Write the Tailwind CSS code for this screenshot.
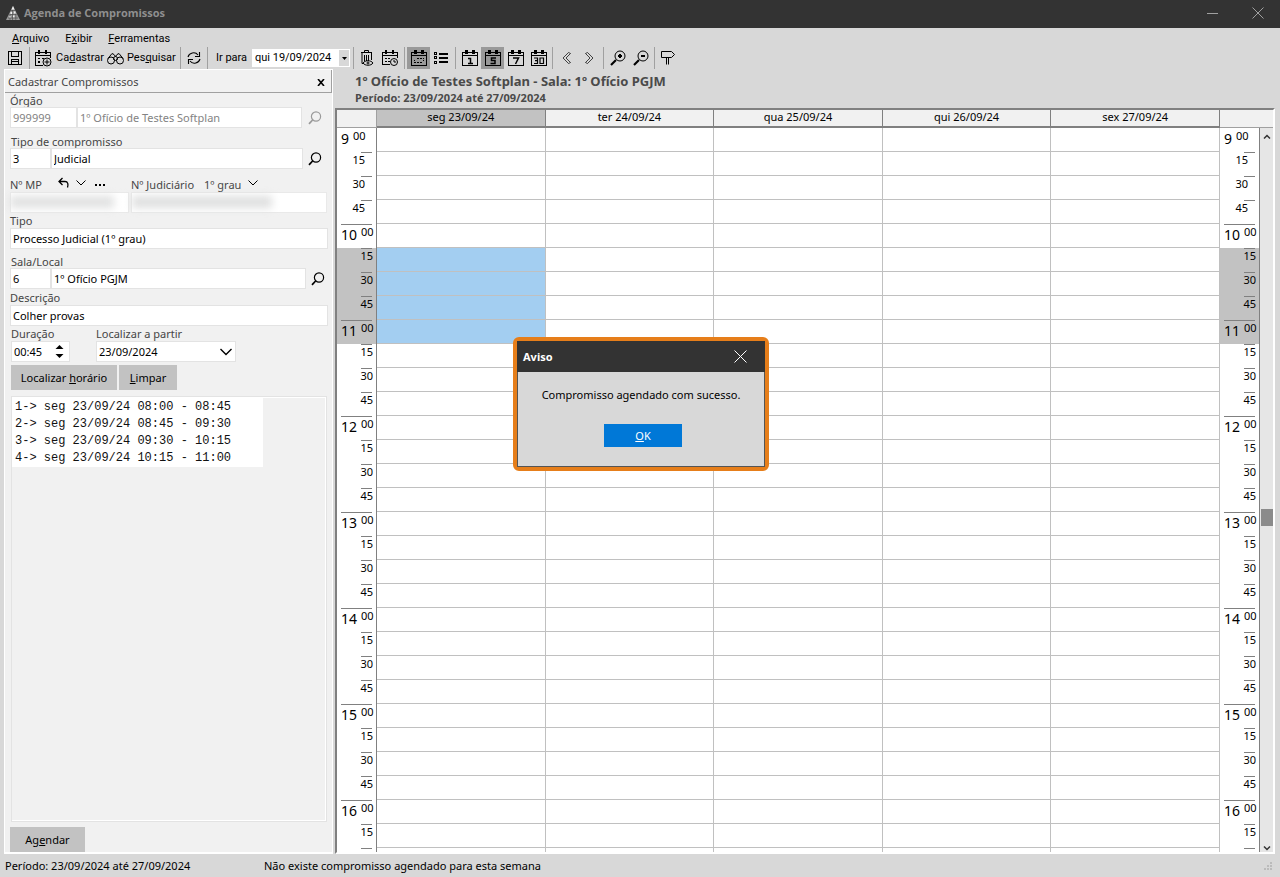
<!DOCTYPE html>
<html lang="pt-BR">
<head>
<meta charset="utf-8">
<title>Agenda de Compromissos</title>
<meta name="viewport" content="width=device-width, initial-scale=1">
<script src="https://cdn.jsdelivr.net/npm/@tailwindcss/browser@4"></script>
</head>
<body class="relative flex h-screen flex-col overflow-hidden bg-[#d8d8d8] font-['Noto_Sans','Open_Sans',sans-serif] text-[11px] leading-4 text-black">

<!-- Shared icons -->
<svg class="hidden" aria-hidden="true">
  <symbol id="i-cal" viewBox="0 0 16 16"><path fill="currentColor" d="M0 2h16v14H0zM1 6v9h14V6zM1 3v2h14V3z" fill-rule="evenodd"/><path fill="currentColor" d="M3 0h3v4H3zM10 0h3v4h-3z"/></symbol>
  <symbol id="i-find" viewBox="0 0 14 14"><circle cx="8" cy="5.5" r="4.6" fill="none" stroke="currentColor" stroke-width="1.2"/><path d="M4.6 9 1 12.8" fill="none" stroke="currentColor" stroke-width="1.7"/></symbol>
  <symbol id="i-zoom" viewBox="0 0 16 16"><circle cx="10" cy="6" r="5" fill="none" stroke="currentColor"/><path d="M6 10 1 15" fill="none" stroke="currentColor" stroke-width="2.2"/><path d="M8 6h4" stroke="currentColor" stroke-width="2"/></symbol>
  <symbol id="i-down" viewBox="0 0 10 6"><path d="M.5.5 5 5 9.500.5" fill="none" stroke="currentColor"/></symbol>
</svg>

<header class="flex h-7 shrink-0 items-center bg-[#333333] pb-0.5 pl-1.5 text-[#8f8f8f]">
  <svg class="h-4 w-3.5" viewBox="0 0 14 16"><path d="M7 1 14 15H0z" fill="#9a9a9a"/><path d="M7 1 8.500 4.500H5.500zM4.500 7h2v2h-2zM8 6.500h1.500v2H8zM3 11h2v2H3zM7 10.500h1.500v2H7z" fill="#f0f0f0"/><path d="M5 5.500h4M3.500 9.500h7M2 13h10M6.500 5v10M9.800 9v6M4 9.500V15" stroke="#444" stroke-width=".6"/></svg>
  <h1 class="ml-1 grow font-['Open_Sans',sans-serif] text-[11px] font-bold">Agenda de Compromissos</h1>
  <button class="mr-[34px] h-4 w-3" aria-label="Minimizar"><svg class="h-4 w-3" viewBox="0 0 12 16"><path d="M1 8.500h11" stroke="#a0a0a0"/></svg></button>
  <button class="mr-4 h-3 w-3" aria-label="Fechar"><svg class="h-3 w-3" viewBox="0 0 12 12"><path d="M.5.5l11 11M11.500.5l-11 11" stroke="#a0a0a0"/></svg></button>
</header>

<nav class="flex h-[19px] shrink-0 items-center gap-4 pt-0.5 pl-3 font-[Roboto,sans-serif]">
  <button><u>A</u>rquivo</button>
  <button>E<u>x</u>ibir</button>
  <button><u>F</u>erramentas</button>
</nav>

<div class="flex h-[22px] shrink-0 items-center pl-1 font-[Roboto,sans-serif]" role="toolbar">
  <button class="grid h-[22px] w-[22px] place-items-center" aria-label="Salvar"><svg class="h-3.5 w-3.5" viewBox="0 0 14 14" fill="none" stroke="#000" shape-rendering="crispEdges"><path d="M.5.5h13v13H.5zM3.500.5v5h7v-5M3.500 13V8.500h7V13M4 10.500h6"/></svg></button>
  <i class="ml-[3px] h-[22px] w-px bg-[#a0a0a0]"></i>
  <button class="ml-[5px] flex h-[22px] w-[66px] items-center gap-1 whitespace-nowrap"><svg class="h-[17px] w-[17px] shrink-0" viewBox="0 0 17 17" fill="none" stroke="#000"><path d="M8 15.500H.5v-13h15V8M.5 5.500h15" shape-rendering="crispEdges"/><path d="M3 0h2v4H3zM10 0h2v4h-2zM3 8h2v1H3zM3 11h2v2H3zM7 8h2v1H7z" fill="#000" stroke="none"/><circle cx="12" cy="12" r="4"/><path d="M12 9.500v5M9.500 12h5"/></svg><span>Ca<u>d</u>astrar</span></button>
  <button class="ml-1.5 flex h-[22px] w-[68px] items-center gap-[3px] whitespace-nowrap"><svg class="h-[13px] w-[17px] shrink-0" viewBox="0 0 17 13" fill="none" stroke="#000"><circle cx="4" cy="8.500" r="3.500"/><circle cx="13" cy="8.500" r="3.500"/><circle cx="8.500" cy="6.500" r="2"/><path d="M1 6.500 5 1.500l2 1 1.500 2 1.500-2 2-1 4 5"/></svg><span>Pes<u>q</u>uisar</span></button>
  <i class="ml-[5px] h-[22px] w-px bg-[#a0a0a0]"></i>
  <button class="ml-[5px] grid h-[22px] w-[15px] place-items-center" aria-label="Atualizar"><svg class="h-3.5 w-3.5" viewBox="0 0 14 14" fill="none" stroke="#000" stroke-width="1.100"><path d="M1 6C2 2 8 0 11 4M13 8c-1 4-7 6-10 2"/><path d="M12.500 1v4.500H8M1.500 13V8.500H6"/></svg></button>
  <i class="ml-[6px] h-[22px] w-px bg-[#a0a0a0]"></i>
  <label class="ml-2 w-9 whitespace-nowrap" for="ir">Ir para</label>
  <div class="relative flex h-[18px] w-[98px] items-center bg-white">
    <select id="ir" class="h-full w-full appearance-none bg-white pl-[3px] outline-none"><option>qui 19/09/2024</option></select>
    <span class="pointer-events-none absolute top-px right-px grid h-4 w-2.5 place-items-center bg-[#d8d8d8]"><svg class="h-[3px] w-[5px]" viewBox="0 0 5 3"><path d="M0 0h5L2.500 3z"/></svg></span>
  </div>
  <i class="ml-[3px] h-[22px] w-px bg-[#a0a0a0]"></i>
  <button class="ml-0.5 grid h-[22px] w-[22px] place-items-center" aria-label="Excluir"><svg class="h-4 w-3.5" viewBox="0 0 14 16" fill="none" stroke="#000"><path d="M1 2.500h11M4.500 2V.5h4V2M2 3v10.500h2M11.500 3v7M4.500 5v6M6.500 5v6M8.500 5v6"/><path d="M3 13c2-3 8-3 10 0-2 3-8 3-10 0z"/><circle cx="8" cy="13" r="1"/></svg></button>
  <button class="ml-px grid h-[22px] w-[22px] place-items-center" aria-label="Reagendar"><svg class="h-4 w-4" viewBox="0 0 16 16" fill="none" stroke="#000"><path d="M8 14.500H.5v-12h15V8M.5 5.500h15" shape-rendering="crispEdges"/><path d="M3 0h2v4H3zM10 0h2v4h-2zM3 8h2v1H3zM3 11h2v1H3zM6 8h2v1H6zM6 11h2v1H6z" fill="#000" stroke="none"/><circle cx="12" cy="12" r="3.500"/><path d="M12 10v2h2"/></svg></button>
  <i class="ml-[3px] h-[22px] w-px bg-[#a0a0a0]"></i>
  <button class="ml-0.5 grid h-[22px] w-[23px] place-items-center bg-[#999999]" aria-label="Calendário"><svg class="h-4 w-4" viewBox="0 0 16 16"><use href="#i-cal"/><path d="M6 8h2v1H6zM9 8h2v1H9zM12 8h1v1h-1zM3 12h2v1H3zM6 12h2v1H6zM9 12h2v1H9zM3 10h1v1H3zM12 10h1v1h-1z"/></svg></button>
  <button class="grid h-[22px] w-[22px] place-items-center" aria-label="Lista"><svg class="h-3 w-3.5" viewBox="0 0 14 12" shape-rendering="crispEdges"><path d="M0 0h3v3H0zM0 4h3v3H0zM0 9h3v3H0zM5 1h9v2H5zM5 5h9v2H5zM5 9h9v2H5z"/><path d="M1 1h1v1H1zM1 5h1v1H1zM1 10h1v1H1z" fill="#d8d8d8"/></svg></button>
  <i class="ml-[3px] h-[22px] w-px bg-[#a0a0a0]"></i>
  <button class="ml-0.5 grid h-[22px] w-[23px] place-items-center" aria-label="1 dia"><svg class="h-4 w-4" viewBox="0 0 16 16"><use href="#i-cal"/><path d="M6 8.500h2.500V14M6 13.500h5" fill="none" stroke="#000" stroke-width="1.500"/></svg></button>
  <button class="grid h-[22px] w-[23px] place-items-center bg-[#999999]" aria-label="5 dias"><svg class="h-4 w-4" viewBox="0 0 16 16"><use href="#i-cal"/><path d="M11 8H6.500v2.500H10V13.500H5.500" fill="none" stroke="#000" stroke-width="1.500"/></svg></button>
  <button class="grid h-[22px] w-[23px] place-items-center" aria-label="7 dias"><svg class="h-4 w-4" viewBox="0 0 16 16"><use href="#i-cal"/><path d="M5 8h5.500L7.500 14" fill="none" stroke="#000" stroke-width="1.500"/></svg></button>
  <button class="grid h-[22px] w-[23px] place-items-center" aria-label="30 dias"><svg class="h-4 w-4" viewBox="0 0 16 16"><use href="#i-cal"/><path d="M3 8h3.500v5.500H3M4 10.700h2.500M9 8h3.500v5.500H9z" fill="none" stroke="#000" stroke-width="1.200"/></svg></button>
  <i class="ml-0.5 h-[22px] w-px bg-[#a0a0a0]"></i>
  <button class="ml-0.5 grid h-[22px] w-[23px] place-items-center" aria-label="Anterior"><svg class="h-3 w-[9px]" viewBox="0 0 9 12" fill="none" stroke="#000"><path d="M6.500.5 1 6l5.500 5.500M8.500 1.500 4 6l4.500 4.500M6.500.5l2 1M6.500 11.500l2-1" stroke-width=".7"/></svg></button>
  <button class="grid h-[22px] w-[23px] place-items-center" aria-label="Próximo"><svg class="h-3 w-[9px]" viewBox="0 0 9 12" fill="none" stroke="#000"><path d="M2.500.5 8 6l-5.500 5.500M.5 1.500 5 6 .5 10.500M2.500.5l-2 1M2.500 11.500l-2-1" stroke-width=".7"/></svg></button>
  <i class="ml-0.5 h-[22px] w-px bg-[#a0a0a0]"></i>
  <button class="ml-0.5 grid h-[22px] w-[23px] place-items-center" aria-label="Ampliar"><svg class="h-4 w-4" viewBox="0 0 16 16"><use href="#i-zoom"/><path d="M10 4v4" stroke="#000" stroke-width="2"/></svg></button>
  <button class="grid h-[22px] w-[23px] place-items-center" aria-label="Reduzir"><svg class="h-4 w-4" viewBox="0 0 16 16"><use href="#i-zoom"/></svg></button>
  <i class="ml-0.5 h-[22px] w-px bg-[#a0a0a0]"></i>
  <button class="ml-px grid h-[22px] w-[23px] place-items-center" aria-label="Sair"><svg class="h-3.5 w-3.5" viewBox="0 0 14 14" fill="none" stroke="#000"><path d="M.5.5h10l3 3-3 3H.5zM5.500 6.500v7M7.500 6.500v7"/></svg></button>
</div>

<main class="flex min-h-0 grow">
  <!-- Booking form -->
  <section class="ml-1 flex w-[329px] shrink-0 flex-col border border-b-2 border-white bg-[#f1f1f1] text-[#454545]">
    <div class="flex h-[23px] shrink-0 items-center border-r border-b border-[#a0a0a0] pt-0.5 pr-1.5 pl-[3px]">
      <h2 class="grow text-[11px]">Cadastrar Compromissos</h2>
      <button aria-label="Fechar painel"><svg class="h-[7px] w-2" viewBox="0 0 8 7"><path d="M1 0l6 7M7 0 1 7" stroke="#000" stroke-width="1.600"/></svg></button>
    </div>
    <form class="flex min-h-0 grow flex-col pt-px pr-[5px] pl-[5px]">
      <label class="h-[13px] leading-[14px]" for="orgao">Órgão</label>
      <div class="flex h-[21px] items-center">
        <input id="orgao" class="h-[21px] w-[67px] border border-[#e3e3e3] bg-white px-0.5 text-[#838383] outline-none" value="999999">
        <input aria-label="Nome do órgão" class="h-[21px] w-[225px] border border-[#e3e3e3] bg-white px-0.5 text-[#838383] outline-none" value="1º Ofício de Testes Softplan">
        <button type="button" class="ml-1.5 text-[#9a9a9a]" aria-label="Buscar órgão"><svg class="h-3.5 w-3.5"><use href="#i-find"/></svg></button>
      </div>
      <label class="mt-[7px] h-[13px] pl-px leading-[14px]" for="tipoc">Tipo de compromisso</label>
      <div class="flex h-[21px] items-center">
        <input id="tipoc" class="h-[21px] w-[41px] border border-[#e3e3e3] bg-white px-0.5 text-black outline-none" value="3">
        <input aria-label="Nome do tipo" class="h-[21px] w-[252px] border border-[#e3e3e3] bg-white px-0.5 text-black outline-none" value="Judicial">
        <button type="button" class="ml-[5px] text-black" aria-label="Buscar tipo"><svg class="h-3.5 w-3.5"><use href="#i-find"/></svg></button>
      </div>
      <div class="mt-1.5 mb-px flex h-4 items-center">
        <label class="w-12 pt-1" for="mp">Nº MP</label>
        <button type="button" class="text-black" aria-label="Desfazer"><svg class="h-3 w-[11px]" viewBox="0 0 11 12" fill="none" stroke="currentColor" stroke-width="1.300"><path d="M4.500 1 1 4.500 4.500 8M1 4.500h6c3 0 3.500 3 2.500 6"/></svg></button>
        <button type="button" class="ml-[7px] text-black" aria-label="Opções"><svg class="h-1.5 w-2.5"><use href="#i-down"/></svg></button>
        <button type="button" class="ml-2 text-black" aria-label="Mais"><svg class="h-3 w-3" viewBox="0 0 12 12"><path d="M1 7h2v2H1zM5 7h2v2H5zM9 7h2v2H9z"/></svg></button>
        <label class="ml-[25px] w-[73px] pt-1" for="jud">Nº Judiciário</label>
        <span class="w-11 pt-1">1º grau</span>
        <button type="button" class="text-black" aria-label="Grau"><svg class="h-1.5 w-2.5"><use href="#i-down"/></svg></button>
      </div>
      <div class="relative flex h-[21px] gap-0.5">
        <input id="mp" class="h-[21px] w-[119px] border border-[#e9e9e9] bg-white outline-none">
        <input id="jud" class="h-[21px] w-[197px] border border-[#e9e9e9] bg-white outline-none">
        <span class="pointer-events-none absolute top-1 left-0 h-3 w-[104px] bg-[#e0e1e1] blur-xs"></span>
        <span class="pointer-events-none absolute top-1 left-[122px] h-3 w-[140px] bg-[#dedfdf] blur-xs"></span>
      </div>
      <label class="mt-px h-3.5 leading-[14px]" for="tipo">Tipo</label>
      <input id="tipo" class="h-[21px] w-[318px] border border-[#e3e3e3] bg-white px-0.5 text-black outline-none" value="Processo Judicial (1º grau)">
      <label class="mt-[6px] h-[13px] pl-px leading-[14px]" for="sala">Sala/Local</label>
      <div class="flex h-[21px] items-center">
        <input id="sala" class="h-[21px] w-[41px] border border-[#e3e3e3] bg-white px-0.5 text-black outline-none" value="6">
        <input aria-label="Nome da sala" class="h-[21px] w-[255px] border border-[#e3e3e3] bg-white px-0.5 text-black outline-none" value="1º Ofício PGJM">
        <button type="button" class="ml-[5px] text-black" aria-label="Buscar sala"><svg class="h-3.5 w-3.5"><use href="#i-find"/></svg></button>
      </div>
      <label class="mt-0.5 h-3.5 leading-[14px]" for="desc">Descrição</label>
      <input id="desc" class="h-[21px] w-[318px] border border-[#e3e3e3] bg-white px-0.5 text-black outline-none" value="Colher provas">
      <div class="mt-px flex pl-px">
        <div class="flex w-[85px] flex-col">
          <label class="h-3.5 leading-[14px]" for="dur">Duração</label>
          <div class="flex h-[21px] w-[59px] items-center border border-[#e3e3e3] bg-white">
            <input id="dur" class="w-[43px] bg-white pl-0.5 text-black outline-none" value="00:45">
            <svg class="h-[15px] w-[9px]" viewBox="0 0 9 15"><path d="M4.500 1 8.500 5H.5zM4.500 14 .5 10h8z"/></svg>
          </div>
        </div>
        <div class="flex flex-col">
          <label class="h-3.5 leading-[14px]" for="loc">Localizar a partir</label>
          <div class="relative flex h-[21px] w-[140px] items-center border border-[#e3e3e3] bg-white">
            <select id="loc" class="w-full appearance-none bg-white pl-0.5 text-black outline-none"><option>23/09/2024</option></select>
            <svg class="pointer-events-none absolute right-0.5 h-2 w-3.5" viewBox="0 0 14 8"><path d="M1.500 1 7 6.500 12.500 1" fill="none" stroke="#000" stroke-width="1.400"/></svg>
          </div>
        </div>
      </div>
      <div class="mt-[3px] flex gap-0.5 pl-px text-black">
        <button type="button" class="h-[25px] w-[106px] bg-[#c2c2c2]">Localizar <u>h</u>orário</button>
        <button type="button" class="h-[25px] w-[58px] bg-[#c2c2c2]"><u>L</u>impar</button>
      </div>
      <div class="mt-1.5 ml-px flex min-h-0 w-[316px] grow border border-[#e3e3e3]">
        <ul class="grow border-t border-r border-b border-white font-['Liberation_Mono',monospace] text-[12px] leading-[17px] text-[#111]">
          <li class="w-[251px] bg-white pt-px pl-[3px]">1-&gt; seg 23/09/24 08:00 - 08:45</li>
          <li class="w-[251px] bg-white pl-[3px]">2-&gt; seg 23/09/24 08:45 - 09:30</li>
          <li class="w-[251px] bg-white pl-[3px]">3-&gt; seg 23/09/24 09:30 - 10:15</li>
          <li class="w-[251px] bg-white pl-[3px]">4-&gt; seg 23/09/24 10:15 - 11:00</li>
        </ul>
      </div>
      <button type="button" class="mt-[5px] h-[25px] w-[75px] shrink-0 bg-[#c2c2c2] text-black">Ag<u>e</u>ndar</button>
    </form>
  </section>

  <!-- Weekly schedule -->
  <section class="mr-[5px] ml-0.5 flex min-w-0 grow flex-col">
    <div class="h-[39px] shrink-0 pl-5 text-[#4a4a4a]">
      <h2 class="pt-[3px] text-[13px] leading-[18px] font-bold">1º Ofício de Testes Softplan - Sala: 1º Ofício PGJM</h2>
      <p class="font-['Open_Sans',sans-serif] leading-4 font-bold">Período: 23/09/2024 até 27/09/2024</p>
    </div>
    <div class="flex min-h-0 grow border-2 border-t-[#808080] border-r-white border-b-white border-l-[#808080] bg-white">
      <div class="min-w-0 grow overflow-hidden">
        <table class="w-full table-fixed border-separate border-spacing-0">
          <colgroup><col class="w-10"><col><col><col><col><col><col class="w-10"></colgroup>
          <thead>
            <tr class="h-[18px] bg-[#f1f1f1] leading-[14px]">
              <th class="border-r border-b border-[#a0a0a0] p-0"></th>
              <th class="border-r border-b-2 border-[#808080] bg-[#c2c2c2] p-0 pb-0.5 font-normal">seg 23/09/24</th>
              <th class="border-r border-b-2 border-[#808080] p-0 pb-0.5 font-normal">ter 24/09/24</th>
              <th class="border-r border-b-2 border-[#808080] p-0 pb-0.5 font-normal">qua 25/09/24</th>
              <th class="border-r border-b-2 border-[#808080] p-0 pb-0.5 font-normal">qui 26/09/24</th>
              <th class="border-r border-b-2 border-[#808080] p-0 pb-0.5 font-normal">sex 27/09/24</th>
              <th class="border-b border-[#a0a0a0] p-0"></th>
            </tr>
          </thead>
          <tbody id="slots"></tbody>
        </table>
      </div>
      <div class="flex w-[13px] shrink-0 flex-col">
        <div class="h-[18px] border-b border-[#a0a0a0] bg-[#f1f1f1]"></div>
        <div class="flex grow flex-col items-center bg-[#e6e6e6]">
          <button class="grid h-4 w-full place-items-center" aria-label="Rolar para cima"><svg class="h-[5px] w-2" viewBox="0 0 8 5"><path d="M1 4.500 4 1.500l3 3" fill="none" stroke="#333" stroke-width="1.500"/></svg></button>
          <div class="grow-[107]"></div>
          <div class="h-[17px] w-3 bg-[#8b8b8b]"></div>
          <div class="grow-[93]"></div>
          <button class="grid h-2 w-full place-items-center" aria-label="Rolar para baixo"><svg class="h-[5px] w-2" viewBox="0 0 8 5"><path d="M1 .5 4 3.500l3-3" fill="none" stroke="#333" stroke-width="1.500"/></svg></button>
        </div>
      </div>
    </div>
  </section>
</main>

<footer class="flex h-[23px] shrink-0 items-center pr-2 pl-[5px]">
  <span class="w-[259px]">Período: 23/09/2024 até 27/09/2024</span>
  <span class="grow">Não existe compromisso agendado para esta semana</span>
  <svg class="h-2 w-2" viewBox="0 0 8 8"><path d="M6 0h2v2H6zM3 3h2v2H3zM6 3h2v2H6zM0 6h2v2H0zM3 6h2v2H3zM6 6h2v2H6z" fill="#bbb"/></svg>
</footer>

<!-- Notice -->
<div role="dialog" aria-labelledby="aviso" class="absolute top-[337px] left-1/2 ml-px flex h-[134px] w-64 -translate-x-1/2 flex-col rounded-md border-4 border-[#e67e1a] bg-[#d8d8d8]">
  <div class="flex h-[31px] shrink-0 items-center bg-[#333333] pr-[18px] pl-1.5 text-white">
    <h2 id="aviso" class="grow font-bold">Aviso</h2>
    <button aria-label="Fechar aviso"><svg class="h-[13px] w-[13px]" viewBox="0 0 13 13"><path d="M.5.5l12 12M12.500.5l-12 12" stroke="#fff"/></svg></button>
  </div>
  <div class="flex grow flex-col items-center border-x border-b border-[#555]">
    <p class="mt-[15px] whitespace-nowrap">Compromisso agendado com sucesso.</p>
    <button class="mt-[21px] ml-1 h-[23px] w-[78px] bg-[#0078d7] text-white"><u>O</u>K</button>
  </div>
</div>

<script>
  // Builds the quarter-hour rows from 9:00 on
  const FIRST_HOUR = 9, ROWS = 31, SEL_FROM = 5, SEL_TO = 8;
  const minutes = ['00', '15', '30', '45'];

  function ruler(i, selected) {
    const hour = FIRST_HOUR + Math.floor(i / 4);
    const q = i % 4;
    const tick = i === 0 ? 'ml-1 h-px w-[31px]' : q === 0 ? 'ml-1 h-px w-[31px] bg-[#808080]' : 'ml-6 h-px w-[11px] bg-[#808080]';
    // The last row is cut by the frame and shows its tick only
    const body = i === ROWS - 1
      ? ''
      : q === 0
      ? `<div class="flex h-[23px] gap-1 pl-1"><span class="text-[14px] leading-5">${hour}</span><span class="leading-[13px]">00</span></div>`
      : `<div class="h-[23px] text-right leading-[13px] ${hour < 10 ? 'pr-[11px]' : 'pr-[3px]'}">${minutes[q]}</div>`;
    return `<td class="h-6 border-r border-[#808080] p-0 ${selected ? 'bg-[#c2c2c2]' : 'bg-white'}"><div class="h-6 overflow-hidden"><div class="${tick}"></div>${body}</div></td>`;
  }

  let html = '';
  for (let i = 0; i < ROWS; i++) {
    const sel = i >= SEL_FROM && i <= SEL_TO;
    html += '<tr>' + ruler(i, sel);
    for (let d = 0; d < 5; d++) {
      html += `<td class="h-6 border-r border-b border-[#c0c0c0] p-0 ${sel && d === 0 ? 'bg-[#a3cef1]' : 'bg-white'}"></td>`;
    }
    html += ruler(i, sel) + '</tr>';
  }
  document.getElementById('slots').innerHTML = html;
</script>
</body>
</html>
